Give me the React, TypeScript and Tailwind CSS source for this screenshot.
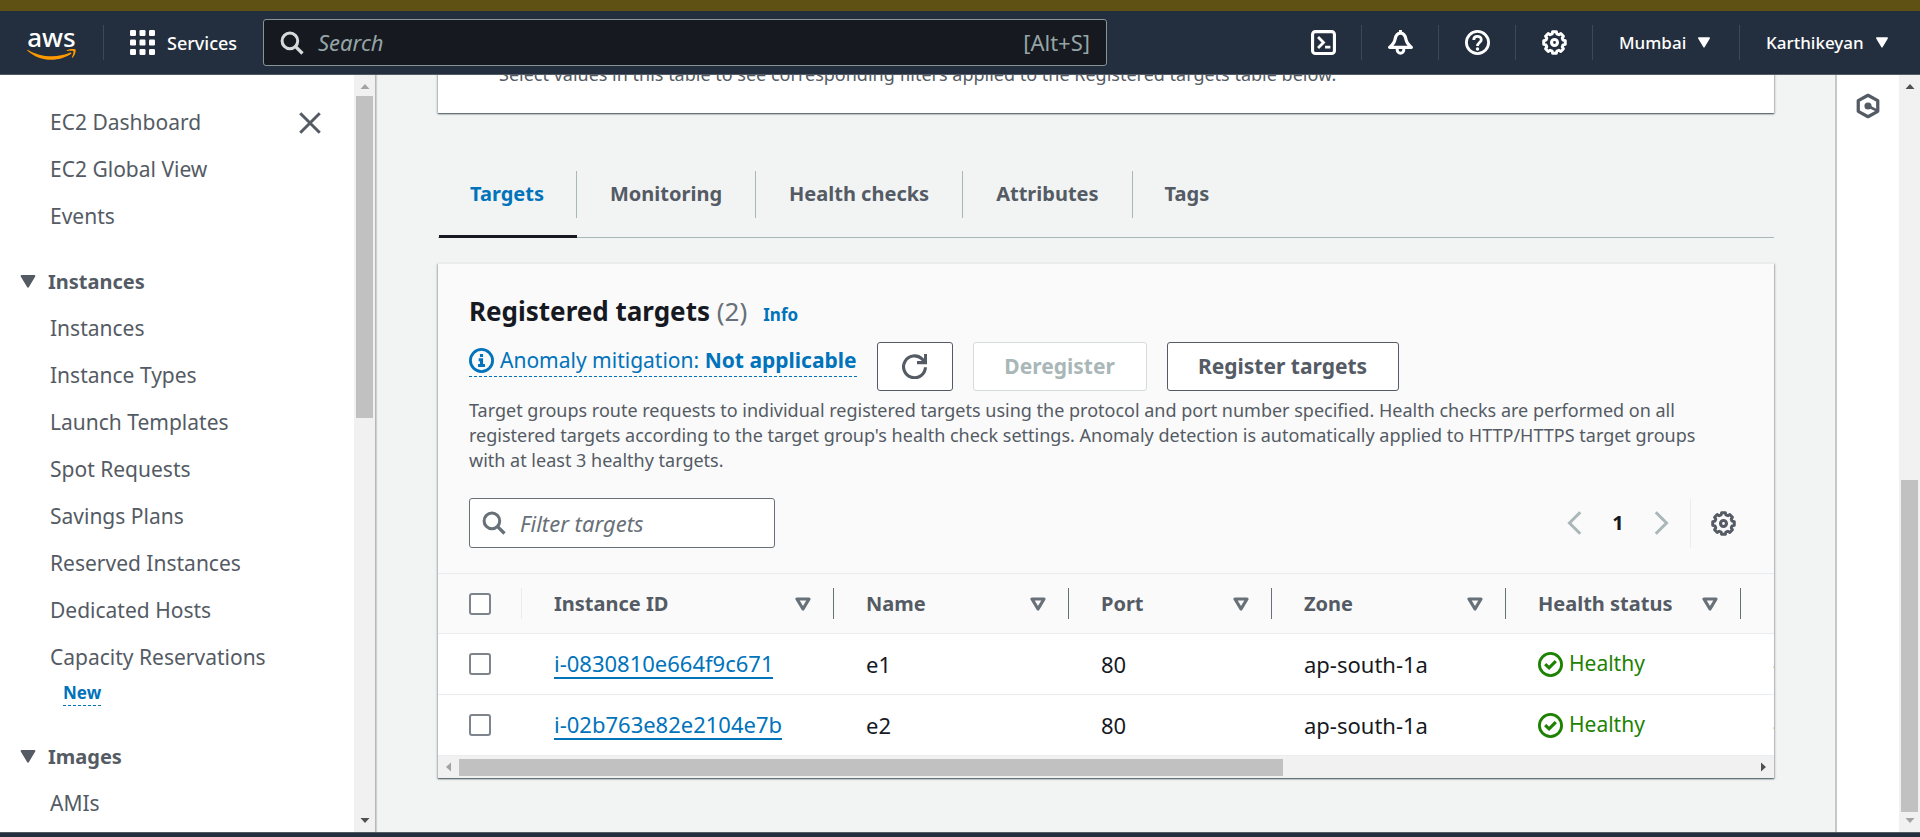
import type { ReactNode } from "react";

const GEAR_PATH = (() => {
  const points: string[] = [];
  for (let i = 0; i < 8; i += 1) {
    const mid = (i * Math.PI) / 4;
    const corners: [number, number][] = [
      [-0.27, 5.7],
      [-0.17, 7],
      [0.17, 7],
      [0.27, 5.7],
    ];
    corners.forEach(([offset, radius]) => {
      const x = 8 + radius * Math.sin(mid + offset);
      const y = 8 - radius * Math.cos(mid + offset);
      points.push(`${x.toFixed(2)} ${y.toFixed(2)}`);
    });
  }
  return `M${points.join("L")}Z`;
})();

type IconProps = { children: ReactNode; className?: string };

function Icon({ children, className = "size-6" }: IconProps) {
  return (
    <svg
      viewBox="0 0 16 16"
      className={`${className} shrink-0`}
      fill="none"
      stroke="currentColor"
      strokeWidth="2"
      strokeLinejoin="round"
      aria-hidden="true"
    >
      {children}
    </svg>
  );
}

function GearIcon() {
  return (
    <Icon className="size-[25px]">
      <path d={GEAR_PATH} strokeWidth="1.9" />
      <circle cx="8" cy="8" r="1.9" strokeWidth="2" />
    </Icon>
  );
}

function SearchIcon() {
  return (
    <Icon>
      <circle cx="6.6" cy="6.6" r="5.2" />
      <path d="M10.4 10.4L15 15" strokeWidth="2.2" />
    </Icon>
  );
}

function CaretDown({ className }: { className: string }) {
  return (
    <svg viewBox="0 0 16 14" className={className} fill="currentColor" aria-hidden="true">
      <path d="M1 0h14c.8 0 1.2.8.8 1.5L9 13c-.5.9-1.5.9-2 0L.2 1.5C-.2.8.2 0 1 0z" />
    </svg>
  );
}

function SortIcon() {
  return (
    <svg
      viewBox="0 0 16 14"
      className="h-[14px] w-4 shrink-0 text-[#687078]"
      fill="none"
      stroke="currentColor"
      strokeWidth="3.2"
      strokeLinejoin="round"
      aria-hidden="true"
    >
      <path d="M2 2h12L8 12z" />
    </svg>
  );
}

function ScrollArrow({ direction, enabled }: { direction: "up" | "down" | "left" | "right"; enabled: boolean }) {
  const shapes = {
    up: "M5.5 14L10 9L14.5 14Z",
    down: "M5.5 6L10 11L14.5 6Z",
    left: "M13 5.5L8 10L13 14.5Z",
    right: "M7 5.5L12 10L7 14.5Z",
  };
  return (
    <svg
      viewBox="0 0 20 20"
      className={enabled ? "size-5 shrink-0 text-[#505050]" : "size-5 shrink-0 text-[#a3a3a3]"}
      fill="currentColor"
      aria-hidden="true"
    >
      <path d={shapes[direction]} />
    </svg>
  );
}

function AwsLogo() {
  return (
    <a href="#home" aria-label="AWS home" className="flex w-[49px] flex-col items-center text-white">
      <span className="text-[26px] leading-[22px] font-medium">aws</span>
      <svg viewBox="0 114 304 68" className="mt-px h-[11px] w-[49px] text-[#ff9900]" fill="currentColor" aria-hidden="true">
        <path d="M273.5 143.7c-32.9 24.3-80.7 37.2-121.8 37.2-57.6 0-109.5-21.3-148.7-56.7-3.1-2.8-.3-6.6 3.4-4.4 42.4 24.6 94.7 39.5 148.8 39.5 36.5 0 76.6-7.6 113.5-23.2 5.5-2.5 10.2 3.6 4.8 7.6z" />
        <path d="M287.2 128.1c-4.2-5.4-27.8-2.6-38.5-1.3-3.2.4-3.7-2.4-.8-4.5 18.8-13.2 49.7-9.4 53.3-5 3.6 4.5-1 35.4-18.6 50.2-2.7 2.3-5.3 1.1-4.1-1.9 4-9.9 12.9-32.2 8.7-37.5z" />
      </svg>
    </a>
  );
}

function HeaderDivider() {
  return <div className="h-[35px] w-px shrink-0 bg-[#414750]" />;
}

function HeaderIconButton({ label, children }: { label: string; children: ReactNode }) {
  return (
    <button type="button" aria-label={label} className="flex w-[76px] justify-center">
      {children}
    </button>
  );
}

function Header() {
  return (
    <header className="flex h-16 shrink-0 items-center border-b border-[#545b64] bg-[#232f3e] pl-[27px] text-white">
      <AwsLogo />
      <div className="ml-[27px]">
        <HeaderDivider />
      </div>
      <button type="button" className="ml-[26px] flex items-center gap-3 text-lg">
        <svg viewBox="0 0 25 25" className="size-[25px]" fill="currentColor" aria-hidden="true">
          {[0, 9.5, 19].map((y) => [0, 9.5, 19].map((x) => <rect key={`${x}-${y}`} x={x} y={y} width="6" height="6" rx="1.2" />))}
        </svg>
        <span className="w-[70px] text-left font-medium">Services</span>
      </button>
      <label className="ml-[26px] flex h-[47px] w-[844px] items-center gap-[14px] rounded-[3px] border border-[#879596] bg-[#16191f] px-4 text-[#d5dbdb]">
        <SearchIcon />
        <input
          type="search"
          aria-label="Search"
          placeholder="Search"
          className="min-w-0 flex-1 bg-transparent text-[22px] italic outline-none placeholder:text-[#95a5a6]"
        />
        <span className="text-[22px] text-[#95a5a6]">[Alt+S]</span>
      </label>
      <div className="ml-auto flex items-center">
        <HeaderIconButton label="CloudShell">
          <Icon className="size-[25px]">
            <rect x="1" y="1" width="14" height="14" rx="1.8" />
            <path d="M4.5 4.5L8 8L4.5 11.5M9 11H12.4" strokeWidth="1.8" strokeLinejoin="miter" />
          </Icon>
        </HeaderIconButton>
        <HeaderDivider />
        <HeaderIconButton label="Notifications">
          <Icon className="size-[25px]">
            <path d="M8 2C5.8 2 4.9 3.8 4.5 6C4.1 8.4 2.8 9.6 1 11.1H15C13.2 9.6 11.900 8.4 11.5 6C11.1 3.8 10.2 2 8 2Z" />
            <path d="M5.9 11.5V12.8a2.1 2.1 0 0 0 4.2 0V11.5M8 0V2" strokeWidth="1.9" />
          </Icon>
        </HeaderIconButton>
        <HeaderDivider />
        <HeaderIconButton label="Help">
          <Icon className="size-[25px]">
            <circle cx="8" cy="8" r="7.1" strokeWidth="1.8" />
            <path d="M5.6 6.4C5.6 3.4 10.4 3.4 10.400 6.2C10.4 8 8 8 8 10.2" strokeWidth="1.8" />
            <circle cx="8" cy="12.2" r="1.1" fill="currentColor" stroke="none" />
          </Icon>
        </HeaderIconButton>
        <HeaderDivider />
        <HeaderIconButton label="Settings">
          <GearIcon />
        </HeaderIconButton>
        <HeaderDivider />
        <button type="button" className="flex w-[146px] items-center gap-3 pl-[26px] text-[17px] font-medium">
          Mumbai
          <CaretDown className="h-[11px] w-3" />
        </button>
        <HeaderDivider />
        <button type="button" className="flex w-[180px] items-center gap-3 pl-[26px] text-[17px] font-medium">
          Karthikeyan
          <CaretDown className="h-[11px] w-3" />
        </button>
      </div>
    </header>
  );
}

const topLinks = ["EC2 Dashboard", "EC2 Global View", "Events"];
const instanceLinks = [
  "Instances",
  "Instance Types",
  "Launch Templates",
  "Spot Requests",
  "Savings Plans",
  "Reserved Instances",
  "Dedicated Hosts",
  "Capacity Reservations",
];

function NavLinks({ items }: { items: string[] }) {
  return (
    <ul>
      {items.map((item) => (
        <li key={item} className="flex h-[47px] items-center pl-[50px]">
          <a href="#nav">{item}</a>
        </li>
      ))}
    </ul>
  );
}

function NavHeading({ children }: { children: ReactNode }) {
  return (
    <button type="button" className="flex h-[47px] w-full items-center gap-3 pl-5 text-xl font-bold">
      <CaretDown className="h-[13px] w-4" />
      {children}
    </button>
  );
}

function Sidebar() {
  return (
    <aside className="z-10 flex w-[376px] shrink-0 border-r border-[#b4babb] bg-white shadow-[1px_0_1px_rgba(0,28,36,0.15)]">
      <nav aria-label="EC2" className="relative min-w-0 flex-1 overflow-hidden pt-6 text-[21px] text-[#545b64]">
        <button type="button" aria-label="Close navigation" className="absolute top-9 right-8">
          <Icon>
            <path d="M1.5 1.5L14.5 14.5M14.5 1.5L1.5 14.5" />
          </Icon>
        </button>
        <NavLinks items={topLinks} />
        <div className="mt-[18px]">
          <NavHeading>Instances</NavHeading>
          <NavLinks items={instanceLinks} />
          <a href="#new" className="ml-[63px] block w-fit border-b border-dashed border-[#0073bb] text-[17px] leading-6 font-bold text-[#0073bb]">
            New
          </a>
        </div>
        <div className="mt-[27px]">
          <NavHeading>Images</NavHeading>
          <NavLinks items={["AMIs"]} />
        </div>
      </nav>
      <div className="flex w-[21px] shrink-0 flex-col items-center bg-[#f1f1f1]" aria-hidden="true">
        <ScrollArrow direction="up" enabled={false} />
        <div className="mt-px h-[322px] w-[17px] bg-[#c1c1c1]" />
        <div className="flex-1" />
        <ScrollArrow direction="down" enabled />
      </div>
    </aside>
  );
}

const tabs = ["Targets", "Monitoring", "Health checks", "Attributes", "Tags"];

function Tabs() {
  return (
    <div role="tablist" className="mt-[42px] flex h-[83px] border-b border-[#aab7b8] pl-px">
      {tabs.map((tab, index) => (
        <button
          key={tab}
          type="button"
          role="tab"
          aria-selected={index === 0}
          className={
            index === 0
              ? "-mb-px flex flex-col border-b-3 border-[#16191f] pt-4 text-xl font-bold text-[#0073bb]"
              : "flex flex-col pt-4 text-xl font-bold text-[#545b64]"
          }
        >
          <span
            className={
              index === tabs.length - 1
                ? "flex h-[47px] items-center px-8 pb-0.5"
                : index === 0
                  ? "flex h-[47px] items-center border-r border-[#aab7b8] pr-8 pb-0.5 pl-[31px]"
                  : "flex h-[47px] items-center border-r border-[#aab7b8] pr-[33px] pb-0.5 pl-[33px]"
            }
          >
            {tab}
          </span>
        </button>
      ))}
    </div>
  );
}

const columns = ["Instance ID", "Name", "Port", "Zone", "Health status"];
const targets = [
  { id: "i-0830810e664f9c671", name: "e1", port: 80, zone: "ap-south-1a", status: "Healthy" },
  { id: "i-02b763e82e2104e7b", name: "e2", port: 80, zone: "ap-south-1a", status: "Healthy" },
];

function Checkbox({ label }: { label: string }) {
  return (
    <input
      type="checkbox"
      aria-label={label}
      className="block size-[22px] appearance-none rounded-[3px] border-2 border-[#7d848b] bg-white checked:bg-[#0073bb]"
    />
  );
}

function TargetsTable() {
  return (
    <div className="overflow-hidden">
      <table className="w-[1700px] table-fixed border-collapse text-left">
        <colgroup>
          <col className="w-[84px]" />
          <col className="w-[312px]" />
          <col className="w-[235px]" />
          <col className="w-[203px]" />
          <col className="w-[234px]" />
          <col className="w-[235px]" />
          <col />
        </colgroup>
        <thead className="bg-[#fafafa] text-xl text-[#545b64]">
          <tr className="h-[60px] border-y border-[#eaeded]">
            <th scope="col" className="p-0">
              <div className="flex h-[31px] items-center border-r border-[#eaeded] pl-[31px]">
                <Checkbox label="Select all targets" />
              </div>
            </th>
            {columns.map((column) => (
              <th key={column} scope="col" className="p-0">
                <div className="flex h-[31px] items-center justify-between border-r border-[#687078] pr-[22px] pl-8">
                  {column}
                  <SortIcon />
                </div>
              </th>
            ))}
            <th scope="col" className="p-0 pl-8">
              Health status details
            </th>
          </tr>
        </thead>
        <tbody className="bg-white text-[22px] text-[#16191f]">
          {targets.map((target) => (
            <tr key={target.id} className="h-[61px] border-b border-[#eaeded]">
              <td className="p-0 pl-[31px]">
                <Checkbox label={`Select ${target.id}`} />
              </td>
              <td className="p-0 pl-8">
                <a href="#target" className="block w-fit border-b-2 border-[#0073bb] leading-7 text-[#0073bb]">
                  {target.id}
                </a>
              </td>
              <td className="p-0 pl-8">{target.name}</td>
              <td className="p-0 pl-8">{target.port}</td>
              <td className="p-0 pl-8">{target.zone}</td>
              <td className="p-0 pl-8">
                <span className="flex items-center gap-[6px] text-[21px] text-[#1d8102]">
                  <Icon className="size-[25px]">
                    <circle cx="8" cy="8" r="7.1" strokeWidth="1.8" />
                    <path d="M4.6 7.8L7.1 10.2L11.4 5.9" strokeLinejoin="miter" />
                  </Icon>
                  {target.status}
                </span>
              </td>
              <td className="p-0 pl-8">-</td>
            </tr>
          ))}
        </tbody>
      </table>
      <div className="flex h-[22px] items-center bg-[#f1f1f1]" aria-hidden="true">
        <ScrollArrow direction="left" enabled={false} />
        <div className="mr-auto ml-px h-[17px] w-[824px] bg-[#c1c1c1]" />
        <ScrollArrow direction="right" enabled />
      </div>
    </div>
  );
}

function RegisteredTargets() {
  return (
    <section className="mt-[25px] border-t border-[#eaeded] bg-[#fafafa] shadow-[0_1px_1px_rgba(0,28,36,0.4),1px_1px_2px_rgba(0,28,36,0.25),-1px_1px_2px_rgba(0,28,36,0.25)]">
      <div className="px-[31px] pt-[29px] pb-[25px]">
        <div className="flex items-baseline">
          <h2 className="text-[26px] leading-9 font-bold text-[#16191f]">
            Registered targets <span className="font-normal text-[#687078]">(2)</span>
          </h2>
          <a href="#info" className="ml-4 text-[17px] font-bold text-[#0073bb]">
            Info
          </a>
        </div>
        <div className="mt-[13px] flex items-start gap-5">
          <button type="button" className="mt-[3px] flex h-8 items-center gap-[6px] border-b border-dashed border-[#0073bb] text-[21px] text-[#0073bb]">
            <Icon className="size-[25px]">
              <circle cx="8" cy="8" r="7.1" strokeWidth="1.8" />
              <path d="M8 11V7.5H6.2M5.8 11.2H10.2M8 5.8V3.8" strokeLinejoin="miter" />
            </Icon>
            <span>
              Anomaly mitigation: <b>Not applicable</b>
            </span>
          </button>
          <button type="button" aria-label="Refresh" className="flex h-[49px] w-[76px] items-center justify-center rounded-[3px] border border-[#545b64] bg-white text-[#545b64]">
            <Icon className="size-[25px]">
              <path d="M15 8.5a7 7 0 1 1-2.2-5.4L15 5.4M15.1 0V5.5H9.6" strokeLinejoin="miter" />
            </Icon>
          </button>
          <button type="button" disabled className="h-[49px] w-[174px] rounded-[3px] border border-[#d5dbdb] bg-white text-[21px] font-bold text-[#aab7b8]">
            Deregister
          </button>
          <button type="button" className="h-[49px] w-[232px] rounded-[3px] border border-[#545b64] bg-white text-[21px] font-bold text-[#545b64]">
            Register targets
          </button>
        </div>
        <p className="mt-[7px] pr-8 text-lg leading-[25px] text-[#545b64]">
          Target groups route requests to individual registered targets using the protocol and port number specified. Health checks are performed on all registered targets according to the target group's health check settings. Anomaly detection is automatically applied to HTTP/HTTPS target groups with at least 3 healthy targets.
        </p>
        <div className="mt-[25px] flex items-center justify-between">
          <label className="flex h-[50px] w-[306px] items-center gap-[14px] rounded-[3px] border border-[#687078] bg-white px-3 text-[#687078]">
            <SearchIcon />
            <input
              type="text"
              aria-label="Filter targets"
              placeholder="Filter targets"
              className="min-w-0 flex-1 bg-transparent text-[22px] italic outline-none placeholder:text-[#687078]"
            />
          </label>
          <div className="flex h-[49px] items-center pr-[7px] text-[#aab7b8]">
            <button type="button" aria-label="Previous page">
              <Icon>
                <path d="M11.5 .8L4.3 8L11.5 15.2" strokeLinejoin="miter" />
              </Icon>
            </button>
            <button type="button" className="w-[62px] text-xl font-bold text-[#16191f]">
              1
            </button>
            <button type="button" aria-label="Next page">
              <Icon>
                <path d="M4.5 .8L11.7 8L4.5 15.2" strokeLinejoin="miter" />
              </Icon>
            </button>
            <button type="button" aria-label="Table preferences" className="ml-[17px] flex h-full items-center border-l border-[#eaeded] pl-5 text-[#545b64]">
              <GearIcon />
            </button>
          </div>
        </div>
      </div>
      <TargetsTable />
    </section>
  );
}

export default function App() {
  return (
    <div className="flex h-screen flex-col overflow-hidden bg-[#f2f3f3] font-['Noto_Sans',sans-serif]">
      <div className="h-[11px] shrink-0 bg-[#5f5013]" />
      <Header />
      <div className="flex min-h-0 flex-1">
        <Sidebar />
        <main className="min-w-0 flex-1 overflow-hidden pr-[61px] pl-[62px]">
          <section className="-mt-[13px] bg-white px-[61px] pb-[26px] text-lg leading-[25px] text-[#545b64] shadow-[0_1px_1px_rgba(0,28,36,0.4),1px_1px_2px_rgba(0,28,36,0.25),-1px_1px_2px_rgba(0,28,36,0.25)]">
            Select values in this table to see corresponding filters applied to the Registered targets table below.
          </section>
          <Tabs />
          <RegisteredTargets />
        </main>
        <aside className="flex w-[64px] shrink-0 justify-center border-l-2 border-[#c3c8c9] bg-white pt-[18px] text-[#545b64]">
          <button type="button" aria-label="Open tools panel" className="h-[26px]">
            <Icon className="size-[26px]">
              <path d="M8 1.4L14 4.7V11.3L8 14.6L2 11.3V4.7Z" />
              <circle cx="8" cy="8" r="2.2" fill="currentColor" stroke="none" />
              <path d="M8 8L13.6 10.9" strokeWidth="1.6" />
            </Icon>
          </button>
        </aside>
        <div className="flex w-[21px] shrink-0 flex-col items-center bg-[#f1f1f1]" aria-hidden="true">
          <ScrollArrow direction="up" enabled />
          <div className="flex-1" />
          <div className="h-[332px] w-[17px] bg-[#c1c1c1]" />
          <ScrollArrow direction="down" enabled={false} />
        </div>
      </div>
      <footer className="h-[5px] shrink-0 border-t border-[#545b64] bg-[#232f3e]" />
    </div>
  );
}
